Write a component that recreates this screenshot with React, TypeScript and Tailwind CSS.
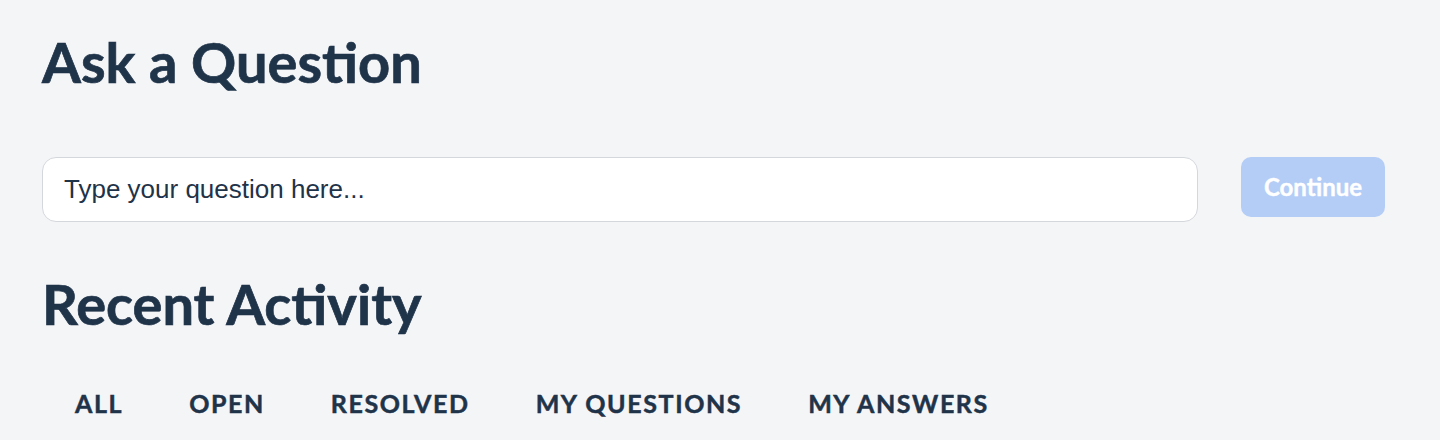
import React, { useState } from 'react';

const tabs = ['All', 'Open', 'Resolved', 'My Questions', 'My Answers'];

export default function App() {
  const [question, setQuestion] = useState('');
  const [active, setActive] = useState('All');

  return (
    <div className="min-h-screen bg-[#f4f5f7] pl-[42px] pr-[55px] pt-[28px] text-[#1f3349] font-['Lato',sans-serif]">
      <h1 className="text-[56px] font-bold leading-[68px] [-webkit-text-stroke:0.7px_#1f3349]">Ask a Question</h1>

      {/* Question input */}
      <div className="mt-[61px] flex items-start">
        <input
          value={question}
          onChange={(e) => setQuestion(e.target.value)}
          placeholder="Type your question here..."
          className="h-[65px] flex-1 rounded-[14px] border border-[#d4d7dc] bg-white px-[21px] text-[26px] font-['Liberation_Sans',sans-serif] text-[#1f3349] placeholder:text-[#1f3349] outline-none"
        />
        <button
          disabled={!question}
          className="ml-[43px] h-[60px] w-[144px] rounded-[10px] bg-[#b4cdf6] text-[24px] font-bold text-white [-webkit-text-stroke:0.4px_#ffffff]"
        >
          Continue
        </button>
      </div>

      <h2 className="mt-[48px] text-[56px] font-bold leading-[68px] [-webkit-text-stroke:0.7px_#1f3349]">Recent Activity</h2>

      {/* Tabs */}
      <div className="mt-[50px] flex gap-[66px] pl-[33px]">
        {tabs.map((tab) => (
          <button
            key={tab}
            onClick={() => setActive(tab)}
            className={`text-[25px] font-bold uppercase leading-[30px] tracking-[1.6px] [-webkit-text-stroke:0.5px_#1f3349] ${active === tab ? 'text-[#1f3349]' : 'text-[#1f3349]'}`}
          >
            {tab}
          </button>
        ))}
      </div>
    </div>
  );
}
